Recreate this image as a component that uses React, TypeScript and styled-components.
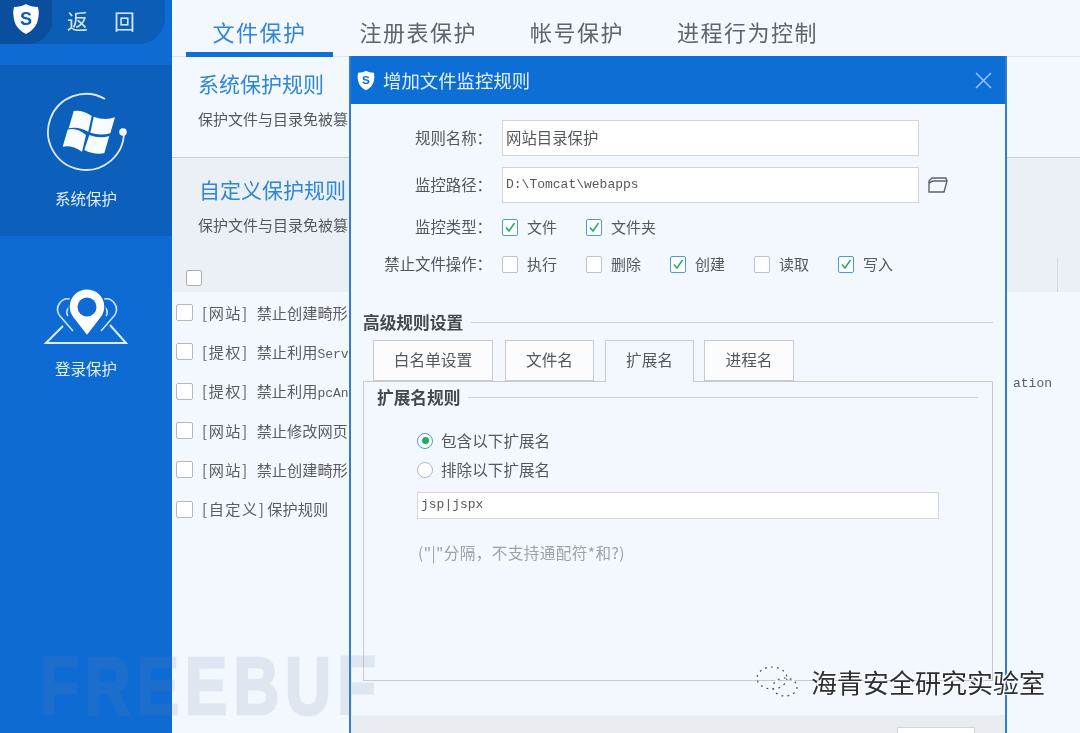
import React from 'react';
import styled, { createGlobalStyle } from 'styled-components';

const GlobalStyle = createGlobalStyle`
  html, body {
    margin: 0;
    padding: 0;
    background: #f3f8fe;
  }
  * {
    box-sizing: border-box;
  }
`;

const CJK = `"Noto Sans CJK SC", "Noto Sans", sans-serif`;
const MONO = `"Liberation Mono", "Noto Sans CJK SC", monospace`;

const Page = styled.div`
  position: relative;
  display: flex;
  width: 1080px;
  height: 733px;
  overflow: hidden;
  font-family: ${CJK};
  filter: blur(0.5px);
`;

const Sidebar = styled.aside`
  width: 172px;
  flex-shrink: 0;
  background: #0e6bd3;
  display: flex;
  flex-direction: column;
`;
const BackBar = styled.div`
  height: 65px;
  flex-shrink: 0;
`;
const BackPill = styled.div`
  width: 165px;
  height: 44px;
  background: #0c5db5;
  border-bottom-right-radius: 26px;
  display: flex;
  align-items: center;
  overflow: hidden;
`;
const BackLogo = styled.div`
  width: 52px;
  height: 44px;
  background: #0a4f9d;
  border-bottom-right-radius: 24px;
  display: flex;
  align-items: flex-start;
  justify-content: center;
  flex-shrink: 0;
  padding: 3px 0 0;
`;
const BackText = styled.span`
  margin: -4px 0 0 15px;
  color: #d9e8f8;
  font-size: 21px;
  letter-spacing: 26px;
  line-height: 40px;
  white-space: nowrap;
`;
const NavItem = styled.div<{ $active?: boolean }>`
  height: ${(p) => (p.$active ? 171 : 170)}px;
  background: ${(p) => (p.$active ? '#0c60bc' : 'transparent')};
  display: flex;
  flex-direction: column;
  align-items: center;
  padding-top: ${(p) => (p.$active ? 26 : 52)}px;
`;
const NavLabel = styled.span<{ $gap: number }>`
  margin-top: ${(p) => p.$gap}px;
  color: #e4effa;
  font-size: 15.5px;
  line-height: 20px;
`;

const Main = styled.main`
  flex: 1;
  min-width: 0;
  display: flex;
  flex-direction: column;
  background: #f3f8fe;
`;
const Tabs = styled.nav`
  height: 57px;
  flex-shrink: 0;
  display: flex;
  padding-left: 14px;
  border-bottom: 1px solid #dfe4e9;
`;
const Tab = styled.div<{ $active?: boolean }>`
  height: 57px;
  padding: 10px 26.5px 0;
  font-size: 22px;
  line-height: 42px;
  letter-spacing: 1.5px;
  white-space: nowrap;
  color: ${(p) => (p.$active ? '#2f86d6' : '#5f6468')};
  border-bottom: 5px solid ${(p) => (p.$active ? '#0f6fd2' : 'transparent')};
`;
const Section = styled.section<{ $muted?: boolean }>`
  flex-shrink: 0;
  height: ${(p) => (p.$muted ? 135 : 100)}px;
  padding: ${(p) => (p.$muted ? '15px 0 0 26px' : '10px 0 0 26px')};
  background: ${(p) => (p.$muted ? '#ebf0f6' : '#f3f8fe')};
  border-top: ${(p) => (p.$muted ? '1px solid #c9ced4' : 'none')};
  position: relative;
`;
const SectionTitle = styled.h2<{ $indent?: number }>`
  margin: 0 0 0 ${(p) => p.$indent ?? 0}px;
  font-size: 21px;
  line-height: 32px;
  font-weight: 400;
  color: #2f86d6;
`;
const SectionDesc = styled.p`
  margin: 9px 0 0;
  font-size: 15px;
  line-height: 22px;
  color: #55585b;
  white-space: nowrap;
`;
const HeaderCheck = styled.span`
  position: absolute;
  left: 14px;
  bottom: 6px;
  width: 16px;
  height: 16px;
  background: #fff;
  border: 1px solid #a9adb1;
  border-radius: 2px;
`;
const HeaderRule = styled.span`
  position: absolute;
  right: 22px;
  bottom: 0;
  width: 1px;
  height: 34px;
  background: #d4d9df;
`;
const RuleList = styled.ul`
  list-style: none;
  margin: 0;
  padding: 1px 28px 0 4px;
`;
const RuleRow = styled.li`
  height: 39.3px;
  display: flex;
  align-items: center;
  gap: 9px;
  font-size: 15.2px;
  color: #5a5d60;
  white-space: nowrap;
`;
const RowBox = styled.span`
  width: 17px;
  height: 17px;
  flex-shrink: 0;
  background: #fff;
  border: 1px solid #b4b8bc;
  border-radius: 2px;
`;
const RowText = styled.span`
  margin-top: -2px;
`;
const RowTag = styled.span<{ $gap: number }>`
  margin-right: ${(p) => p.$gap}px;
  letter-spacing: 1.5px;
`;
const RowLatin = styled.span`
  font-family: ${MONO};
  font-size: 13px;
`;
const RowTrail = styled.span`
  margin-left: auto;
  font-family: ${MONO};
  font-size: 13px;
  transform: translateY(-8px);
`;

const Dialog = styled.div`
  position: absolute;
  left: 349px;
  top: 56px;
  width: 658px;
  height: 677px;
  display: flex;
  flex-direction: column;
  background: #f2f8fe;
  border: solid #2f7fd0;
  border-width: 0 2px;
  overflow: hidden;
`;
const DialogHead = styled.header`
  height: 48px;
  flex-shrink: 0;
  background: #0d6fd6;
  display: flex;
  align-items: center;
  padding: 0 13px 0 6px;
  color: #e6f0fb;
`;
const DialogTitle = styled.h1`
  margin: 0 0 0 8px;
  flex: 1;
  font-size: 18.4px;
  font-weight: 400;
  line-height: 48px;
`;
const DialogBody = styled.div`
  flex: 1;
  min-height: 0;
  padding: 16px 12px 0;
`;
const FormRow = styled.div<{ $height: number; $mt?: number }>`
  height: ${(p) => p.$height}px;
  margin-top: ${(p) => p.$mt ?? 0}px;
  display: flex;
  align-items: center;
`;
const FieldLabel = styled.label`
  width: 129px;
  margin-right: 10px;
  padding-bottom: 2px;
  flex-shrink: 0;
  text-align: right;
  font-size: 15.4px;
  color: #54575a;
  white-space: nowrap;
`;
const TextBox = styled.div<{ $mono?: boolean; $width?: number }>`
  width: ${(p) => p.$width ?? 417}px;
  height: 100%;
  background: #fff;
  border: 1px solid #d2d6da;
  display: flex;
  align-items: center;
  padding: 0 0 2px 3px;
  font-family: ${(p) => (p.$mono ? MONO : CJK)};
  font-size: ${(p) => (p.$mono ? '13px' : '15.4px')};
  color: #55585b;
  white-space: pre;
`;
const Option = styled.span`
  width: 84px;
  display: flex;
  align-items: center;
  gap: 9px;
  padding-bottom: 2px;
  font-size: 15px;
  color: #55585b;
  white-space: nowrap;
`;
const BoxMark = styled.span<{ $on?: boolean }>`
  width: 16px;
  height: 17px;
  margin-bottom: -2px;
  flex-shrink: 0;
  background: #fff;
  border: 1px solid ${(p) => (p.$on ? '#4c9bd6' : '#bfc3c7')};
  border-radius: 2px;
  display: flex;
  align-items: center;
  justify-content: center;
`;
const GroupHead = styled.div<{ $mt: number }>`
  margin-top: ${(p) => p.$mt}px;
  display: flex;
  align-items: center;
  gap: 8px;
  font-weight: 700;
  font-size: 16.7px;
  line-height: 20px;
  color: #45484b;
  white-space: nowrap;
  &::after {
    content: '';
    flex: 1;
    height: 1px;
    background: #c9d0d6;
  }
`;
const TabStrip = styled.div`
  margin-top: 8px;
  height: 41px;
  display: flex;
  padding-left: 10px;
  position: relative;
  z-index: 1;
`;
const SubTab = styled.div<{ $width: number; $ml: number; $active?: boolean }>`
  width: ${(p) => p.$width}px;
  margin-left: ${(p) => p.$ml}px;
  height: ${(p) => (p.$active ? 42 : 41)}px;
  background: ${(p) => (p.$active ? '#f2f8fe' : '#fafcfe')};
  border: 1px solid #c6cbd0;
  border-bottom: ${(p) => (p.$active ? 'none' : '1px solid #c6cbd0')};
  text-align: center;
  font-size: 15.7px;
  line-height: 37px;
  color: #55585b;
`;
const TabPanel = styled.div`
  height: 300px;
  border: 1px solid #c6cbd0;
  padding: 5px 14px 0 13px;
`;
const RadioRow = styled.div<{ $mt: number }>`
  margin: ${(p) => p.$mt}px 0 0 40px;
  height: 20px;
  display: flex;
  align-items: center;
  gap: 8px;
  font-size: 15.6px;
  color: #55585b;
`;
const Radio = styled.span<{ $on?: boolean }>`
  width: 16px;
  height: 16px;
  margin-top: 1px;
  border-radius: 50%;
  background: #fff;
  border: 1px solid ${(p) => (p.$on ? '#4c9bd6' : '#b4b8bc')};
  display: flex;
  align-items: center;
  justify-content: center;
  &::after {
    content: '';
    width: 7px;
    height: 7px;
    border-radius: 50%;
    background: ${(p) => (p.$on ? '#1fae5c' : 'transparent')};
  }
`;
const ExtInput = styled.div`
  margin: 13px 0 0 40px;
  height: 27px;
`;
const Hint = styled.p`
  margin: 22px 0 0 41px;
  font-size: 15.6px;
  line-height: 22px;
  letter-spacing: 0.4px;
  color: #a0a3a6;
  white-space: nowrap;
`;
const DialogFoot = styled.footer`
  height: 18px;
  flex-shrink: 0;
  background: #e9edf2;
  display: flex;
  justify-content: flex-end;
  padding: 12px 30px 0 0;
`;
const FootButton = styled.span`
  width: 78px;
  height: 20px;
  background: #fff;
  border: 1px solid #d2d6da;
`;

const Freebuf = styled.div`
  position: absolute;
  left: 40px;
  top: 641px;
  font-family: "Liberation Sans", sans-serif;
  font-weight: 700;
  font-size: 81px;
  line-height: 90px;
  letter-spacing: 8px;
  color: rgb(110, 130, 165);
  -webkit-text-stroke: 3px rgb(110, 130, 165);
  opacity: 0.14;
  transform: scaleX(0.78);
  transform-origin: left top;
  pointer-events: none;
`;
const WeChatMark = styled.div`
  position: absolute;
  left: 752px;
  top: 663px;
  display: flex;
  align-items: center;
  gap: 11px;
  pointer-events: none;
`;
const WeChatText = styled.span`
  font-size: 26px;
  line-height: 38px;
  color: #2c2f34;
  white-space: nowrap;
  text-shadow: 1px 1px 0 #fff, -1px -1px 0 #fff;
`;

const ShieldLogo = ({ width, height, fg = '#fff', bg = '#0c5db5' }: { width: number; height: number; fg?: string; bg?: string }) => (
  <svg width={width} height={height} viewBox="0 0 26 32">
    <path d="M13 1c3 2 7 3 12 3 1 4 1 8 0 12-1 7-6 12-12 15C7 28 2 23 1 16 0 12 0 8 1 4c5 0 9-1 12-3z" fill={fg} />
    <text x="13" y="22" textAnchor="middle" fontSize="18" fontWeight="700" fontFamily="Liberation Sans" fill={bg}>
      S
    </text>
  </svg>
);

const WindowsBadge = () => (
  <svg width="82" height="82" viewBox="0 0 82 82">
    <path d="M60 8A38 38 0 1 0 79 41" fill="none" stroke="#dfeafa" strokeWidth="1.800" />
    <circle cx="78" cy="41" r="3.800" fill="#f2f7fd" />
    <g fill="#f8fbff">
      <path d="M28.700 20Q38 19 46.700 25L43.300 40.700Q33 35 23.700 37.300z" />
      <path d="M48.700 25.700Q60 30 70 26.300L65.300 42.300Q55 45 45.300 41.700z" />
      <path d="M22.700 38.500Q32 36 41 44L37 60.700Q27 54 17.700 55.700z" />
      <path d="M44.300 44Q55 48 64.300 45L59.300 62.300Q49 64 39.300 59z" />
    </g>
  </svg>
);

const PinBadge = () => (
  <svg width="84" height="56" viewBox="0 0 84 56">
    <path d="M19 38 L2 55 L82 55 L66 37" fill="none" stroke="#dcebfb" strokeWidth="2" />
    <g fill="none" stroke="#cfe2f8" strokeWidth="1.600">
      <path d="M29 43 L16 28a10.500 10.500 0 0 1 10-17" />
      <path d="M57 43 L70 28a10.500 10.500 0 0 0-10-17" />
      <path d="M24 28a6 6 0 0 1 2-9" />
      <path d="M62 28a6 6 0 0 0-2-9" />
    </g>
    <path d="M43 48 L29 30a18 18 0 1 1 28 0z" fill="#fff" stroke="#0e6bd3" strokeWidth="1.500" />
    <circle cx="43" cy="19" r="9.500" fill="#0e6bd3" />
  </svg>
);

const Check = () => (
  <svg width="12" height="12" viewBox="0 0 12 12">
    <path d="M2 6.500 L5 10 L10.500 2" fill="none" stroke="#20ad63" strokeWidth="1.500" />
  </svg>
);

const CheckOption = ({ label, on }: { label: string; on?: boolean }) => (
  <Option>
    <BoxMark $on={on}>{on && <Check />}</BoxMark>
    {label}
  </Option>
);

const FolderIcon = () => (
  <svg width="22" height="18" viewBox="0 0 22 18" style={{ marginLeft: 8 }}>
    <path d="M2 16V5l3-3h14l1 3-3 11H2zM2 7l4-2h14" fill="none" stroke="#5f6468" strokeWidth="1.400" />
  </svg>
);

const CloseIcon = () => (
  <svg width="17" height="17" viewBox="0 0 17 17">
    <path d="M1 1l15 15M16 1L1 16" stroke="#a9cdf2" strokeWidth="1.400" />
  </svg>
);

const WeChatIcon = () => (
  <svg width="48" height="36" viewBox="0 0 48 36">
    <g fill="none" stroke="#4a4d52" strokeWidth="1.200" strokeDasharray="2 4">
      <ellipse cx="20" cy="14" rx="15" ry="11" />
      <ellipse cx="33" cy="23" rx="12" ry="9" />
    </g>
    <g fill="none" stroke="#fff" strokeWidth="1.400" strokeDasharray="3 3" strokeDashoffset="3">
      <ellipse cx="20" cy="14" rx="15" ry="11" />
      <ellipse cx="33" cy="23" rx="12" ry="9" />
    </g>
  </svg>
);

const MAIN_TABS = ['文件保护', '注册表保护', '帐号保护', '进程行为控制'];

const RULES = [
  { tag: '[网站]', gap: 8, text: '禁止创建畸形' },
  { tag: '[提权]', gap: 8, text: '禁止利用', latin: 'Serv' },
  { tag: '[提权]', gap: 8, text: '禁止利用', latin: 'pcAn', trail: 'ation' },
  { tag: '[网站]', gap: 8, text: '禁止修改网页' },
  { tag: '[网站]', gap: 8, text: '禁止创建畸形' },
  { tag: '[自定义]', gap: 2, text: '保护规则' },
];

const SUB_TABS = [
  { label: '白名单设置', width: 120, ml: 0 },
  { label: '文件名', width: 89, ml: 12 },
  { label: '扩展名', width: 89, ml: 11, active: true },
  { label: '进程名', width: 90, ml: 10 },
];

const App: React.FC = () => {
  return (
    <Page>
      <GlobalStyle />
      <Sidebar>
        <BackBar>
          <BackPill>
            <BackLogo>
              <ShieldLogo width={26} height={32} />
            </BackLogo>
            <BackText>返回</BackText>
          </BackPill>
        </BackBar>
        <NavItem $active>
          <WindowsBadge />
          <NavLabel $gap={15}>系统保护</NavLabel>
        </NavItem>
        <NavItem>
          <PinBadge />
          <NavLabel $gap={14}>登录保护</NavLabel>
        </NavItem>
      </Sidebar>

      <Main>
        <Tabs>
          {MAIN_TABS.map((tab, i) => (
            <Tab key={tab} $active={i === 0}>
              {tab}
            </Tab>
          ))}
        </Tabs>
        <Section>
          <SectionTitle>系统保护规则</SectionTitle>
          <SectionDesc>保护文件与目录免被篡</SectionDesc>
        </Section>
        <Section $muted>
          <SectionTitle $indent={1}>自定义保护规则</SectionTitle>
          <SectionDesc>保护文件与目录免被篡</SectionDesc>
          <HeaderCheck />
          <HeaderRule />
        </Section>
        <RuleList>
          {RULES.map((rule) => (
            <RuleRow key={rule.tag + rule.text + rule.latin}>
              <RowBox />
              <RowText>
                <RowTag $gap={rule.gap}>{rule.tag}</RowTag>
                {rule.text}
                {rule.latin && <RowLatin>{rule.latin}</RowLatin>}
              </RowText>
              {rule.trail && <RowTrail>{rule.trail}</RowTrail>}
            </RuleRow>
          ))}
        </RuleList>
      </Main>

      <Dialog>
        <DialogHead>
          <ShieldLogo width={18} height={21} bg="#0d6fd6" />
          <DialogTitle>增加文件监控规则</DialogTitle>
          <CloseIcon />
        </DialogHead>
        <DialogBody>
          <FormRow $height={36}>
            <FieldLabel>规则名称：</FieldLabel>
            <TextBox>网站目录保护</TextBox>
          </FormRow>
          <FormRow $height={36} $mt={11}>
            <FieldLabel>监控路径：</FieldLabel>
            <TextBox $mono>{'D:\\Tomcat\\webapps'}</TextBox>
            <FolderIcon />
          </FormRow>
          <FormRow $height={20} $mt={14}>
            <FieldLabel>监控类型：</FieldLabel>
            <CheckOption label="文件" on />
            <CheckOption label="文件夹" on />
          </FormRow>
          <FormRow $height={20} $mt={17}>
            <FieldLabel>禁止文件操作：</FieldLabel>
            <CheckOption label="执行" />
            <CheckOption label="删除" />
            <CheckOption label="创建" on />
            <CheckOption label="读取" />
            <CheckOption label="写入" on />
          </FormRow>
          <GroupHead $mt={38}>高级规则设置</GroupHead>
          <TabStrip>
            {SUB_TABS.map((tab) => (
              <SubTab key={tab.label} $width={tab.width} $ml={tab.ml} $active={tab.active}>
                {tab.label}
              </SubTab>
            ))}
          </TabStrip>
          <TabPanel>
            <GroupHead $mt={0}>扩展名规则</GroupHead>
            <RadioRow $mt={23}>
              <Radio $on />
              包含以下扩展名
            </RadioRow>
            <RadioRow $mt={9}>
              <Radio />
              排除以下扩展名
            </RadioRow>
            <ExtInput>
              <TextBox $mono $width={522}>jsp|jspx</TextBox>
            </ExtInput>
            <Hint>("|"分隔，不支持通配符*和?)</Hint>
          </TabPanel>
        </DialogBody>
        <DialogFoot>
          <FootButton />
        </DialogFoot>
      </Dialog>

      <Freebuf>FREEBUF</Freebuf>
      <WeChatMark>
        <WeChatIcon />
        <WeChatText>海青安全研究实验室</WeChatText>
      </WeChatMark>
    </Page>
  );
};

export default App;
